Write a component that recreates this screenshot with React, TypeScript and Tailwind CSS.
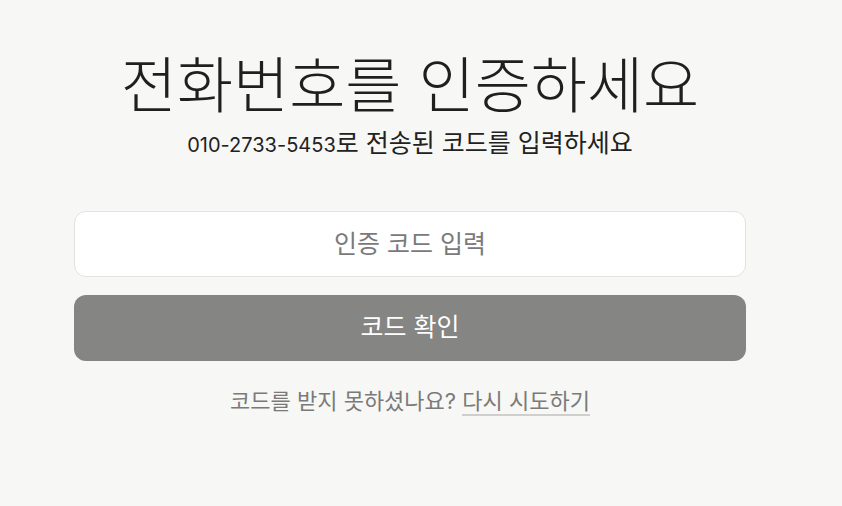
import React, { useState } from "react";

const App: React.FC = () => {
  const [code, setCode] = useState<string>("");

  return (
    <div className="min-h-screen w-full bg-[#f7f7f5] font-['Inter','Noto_Sans_CJK_KR',sans-serif]">
      <div className="ml-[74px] flex w-[672px] flex-col items-center pt-[44px]">
        {/* Heading */}
        <h1 className="text-[61px] font-light leading-[84px] text-[#1f1f1f]">
          전화번호를 인증하세요
        </h1>
        <p className="text-[20px] leading-[30px] text-[#222]">
          010-2733-5453<span className="text-[25px]">로 전송된 코드를 입력하세요</span>
        </p>

        {/* Code form */}
        <input
          type="text"
          value={code}
          onChange={(e) => setCode(e.target.value)}
          placeholder="인증 코드 입력"
          className="mt-[51px] h-[66px] w-full rounded-[12px] border border-[#e2e2e0] bg-white text-center text-[25px] text-[#333] outline-none placeholder:text-[#7a7a7a]"
        />
        <button className="mt-[18px] h-[66px] w-full rounded-[12px] bg-[#858583] text-[25px] font-normal text-white">
          코드 확인
        </button>

        <p className="mt-[25px] text-[22px] leading-[30px] text-[#7a7a7a]">
          코드를 받지 못하셨나요?{" "}
          <a href="#" className="border-b-2 border-[#cfcfcd]">
            다시 시도하기
          </a>
        </p>
      </div>
    </div>
  );
};

export default App;
